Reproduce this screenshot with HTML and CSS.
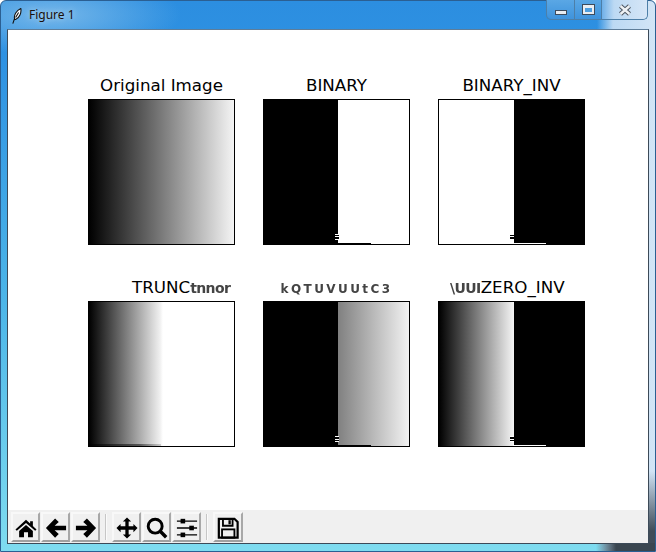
FILE: index.html
```html
<!DOCTYPE html>
<html lang="en">
<head>
  <meta charset="UTF-8">
  <title>Figure 1</title>
  <link rel="stylesheet" href="styles.css">
</head>
<body>
  <div class="window">
    <div class="titlebar">
      <svg class="feather" width="10" height="16" viewBox="0 0 10 16">
        <path d="M0.8 15.6 L2.6 10.5 M2.6 10.8 C1.6 7 4.5 2.5 8.8 0.6 C9.6 4.5 7.5 10 3.6 11.4 C3.2 11.5 2.9 11.3 2.6 10.8 M3.6 9.5 L6.6 4.5" fill="#fff" stroke="#111" stroke-width="1.1"/>
      </svg>
      <span class="title-text">Figure 1</span>
      <div class="win-controls">
        <div class="win-btn min"><span class="min-glyph"></span></div>
        <div class="win-btn max"><span class="max-glyph"></span></div>
        <div class="win-btn close">
          <svg width="14" height="12" viewBox="0 0 14 12">
            <path d="M2.5 2 L11.5 10 M11.5 2 L2.5 10" stroke="#4c5560" stroke-width="4.4"/>
            <path d="M2.5 2 L11.5 10 M11.5 2 L2.5 10" stroke="#eef1f4" stroke-width="2.4"/>
          </svg>
        </div>
      </div>
    </div>
    <div class="client">
      <div class="figure">
        <div class="subplot">
          <div class="plot-title">Original Image</div>
          <div class="axes grad-orig"></div>
        </div>
        <div class="subplot">
          <div class="plot-title">BINARY</div>
          <div class="axes grad-binary"><span class="jag"></span><span class="foot foot-black"></span></div>
        </div>
        <div class="subplot">
          <div class="plot-title">BINARY_INV</div>
          <div class="axes grad-binary-inv"><span class="jag"></span><span class="foot foot-white"></span></div>
        </div>
        <div class="subplot">
          <div class="plot-title title-trunc">TRUNC<span class="smudge">tnnor</span></div>
          <div class="axes grad-trunc"><span class="foot foot-trunc"></span></div>
        </div>
        <div class="subplot">
          <div class="plot-title"><span class="smudge smudge-wide">kQTUVUUtC3</span></div>
          <div class="axes grad-tozero"><span class="jag"></span><span class="foot foot-black"></span></div>
        </div>
        <div class="subplot">
          <div class="plot-title title-inv"><span class="smudge">\UUI</span>ZERO_INV</div>
          <div class="axes grad-tozero-inv"><span class="jag"></span><span class="foot foot-white"></span></div>
        </div>
      </div>
      <div class="toolbar">
        <div class="tool">
          <svg viewBox="0 0 24 24"><path d="M12 3 L16.5 7 V4.5 H19.5 V9.8 L23.5 13.5 L22 15 L12 6.5 L2 15 L0.5 13.5 Z M4.5 15.2 L12 8.8 L19.5 15.2 V22 H14.2 V16.5 H9.8 V22 H4.5 Z" fill="#000"/></svg>
        </div>
        <div class="tool">
          <svg viewBox="0 0 24 24"><path d="M1 12 L11 1.5 L15 5.5 L10.5 9.5 H23 V14.5 H10.5 L15 18.5 L11 22.5 Z" fill="#000"/></svg>
        </div>
        <div class="tool">
          <svg viewBox="0 0 24 24"><path d="M23 12 L13 1.5 L9 5.5 L13.5 9.5 H1 V14.5 H13.5 L9 18.5 L13 22.5 Z" fill="#000"/></svg>
        </div>
        <span class="tool-sep"></span>
        <div class="tool">
          <svg viewBox="0 0 24 24"><path d="M12 0.5 L16.5 5 H13.8 V10.2 H19 V7.5 L23.5 12 L19 16.5 V13.8 H13.8 V19 H16.5 L12 23.5 L7.5 19 H10.2 V13.8 H5 V16.5 L0.5 12 L5 7.5 V10.2 H10.2 V5 H7.5 Z" fill="#000"/></svg>
        </div>
        <div class="tool">
          <svg viewBox="0 0 24 24"><circle cx="10" cy="10" r="7.6" fill="none" stroke="#000" stroke-width="3.2"/><path d="M15 15 L22 22" stroke="#000" stroke-width="3.8"/></svg>
        </div>
        <div class="tool">
          <svg viewBox="0 0 24 24"><path d="M1 4.5 H23 M1 12 H23 M1 19.5 H23" stroke="#000" stroke-width="1.5"/><rect x="5" y="2" width="5" height="5" fill="#000"/><rect x="14.5" y="9.5" width="5" height="5" fill="#000"/><rect x="5" y="17" width="5" height="5" fill="#000"/></svg>
        </div>
        <span class="tool-sep"></span>
        <div class="tool tool-save">
          <svg viewBox="0 0 24 24"><path d="M2 2 H19 L22.5 5.5 V22.5 H2 Z" fill="none" stroke="#000" stroke-width="2.4"/><path d="M6.5 2 H17 V9.5 H6.5 Z" fill="none" stroke="#000" stroke-width="2"/><rect x="12.5" y="3.5" width="2.5" height="4.5" fill="#000"/><rect x="5.5" y="13.5" width="13.5" height="9" fill="none" stroke="#000" stroke-width="2"/></svg>
        </div>
      </div>
    </div>
  </div>
</body>
</html>
```
FILE: styles.css
```css
* {
  box-sizing: border-box;
}
html, body {
  margin: 0;
  height: 100%;
}
body {
  font-family: "DejaVu Sans", sans-serif;
  background: #fff;
}
.window {
  width: 656px;
  height: 552px;
  display: flex;
  flex-direction: column;
  border-radius: 6px 6px 0 0;
  border: 1px solid #2b5f92;
  background:
    linear-gradient(90deg, rgba(58,70,80,0) 595px, #3a4650 615px) 0 100% / 100% 8px no-repeat,
    linear-gradient(180deg, rgba(58,70,80,0) 470px, #3f4c58 530px) 100% 0 / 7px 100% no-repeat,
    radial-gradient(ellipse 130px 40px at 50px 14px, rgba(130, 190, 235, 0.85), rgba(130, 190, 235, 0) 100%),
    linear-gradient(90deg, rgba(188,217,243,0) 596px, #bcd9f3 612px, #d3e5f6 100%),
    linear-gradient(180deg, #2c8ee0 0, #2f92e2 60px, #4cb5e8 300px, #7fdcf0 100%);
}
.titlebar {
  height: 28px;
  flex: none;
  display: flex;
  align-items: flex-start;
  padding-left: 11px;
}
.feather {
  margin-top: 7px;
}
.title-text {
  margin: 6px 0 0 7px;
  font-family: "Noto Sans", sans-serif;
  font-size: 12px;
  line-height: 16px;
  color: #1a0f0a;
  text-shadow: 0 0 6px rgba(255,255,255,0.6);
}
.win-controls {
  margin-left: auto;
  margin-right: 7px;
  display: flex;
  height: 20px;
  margin-top: -1px;
  border: 1px solid #4d7fa8;
  border-top: 0;
  border-radius: 0 0 5px 5px;
}
.win-btn {
  display: flex;
  align-items: center;
  justify-content: center;
  border-right: 1px solid #4d7fa8;
}
.win-btn.min {
  width: 28px;
  border-radius: 0 0 0 5px;
  background: linear-gradient(180deg, #5aa7e5, #3f93dc);
}
.win-btn.max {
  width: 27px;
  background: linear-gradient(180deg, #5aa7e5, #3f93dc);
}
.win-btn.close {
  width: 45px;
  border-right: 0;
  border-radius: 0 0 5px 0;
  background: linear-gradient(90deg, #6fb0e8 0, #bcd9f3 12px, #d6e6f7 100%);
}
.min-glyph {
  display: block;
  width: 12px;
  height: 5px;
  margin-top: 5px;
  background: #e9edf2;
  border: 1px solid #3d4b5c;
}
.max-glyph {
  display: block;
  width: 11px;
  height: 9px;
  background: #4f9fe0;
  border: 2px solid #e9edf2;
  border-top-width: 3px;
  outline: 1px solid #3d4b5c;
}
.client {
  flex: 1;
  display: flex;
  flex-direction: column;
  margin: 0 6px 7px 6px;
  background: #fff;
  border: 1px solid #3c4a58;
  border-top-color: #5e7d99;
}
.figure {
  flex: 1;
  display: grid;
  grid-template-columns: repeat(3, 147px);
  grid-auto-rows: 146px;
  column-gap: 28px;
  row-gap: 56px;
  padding: 69px 0 0 80px;
}
.subplot {
  position: relative;
}
.plot-title {
  position: absolute;
  left: -14px;
  right: -14px;
  top: -24px;
  text-align: center;
  font-size: 16.7px;
  line-height: 20px;
  color: #000;
  white-space: nowrap;
}
.title-trunc {
  left: 44px;
  right: auto;
}
.title-inv {
  left: 12px;
  right: auto;
}
.axes {
  position: relative;
  width: 147px;
  height: 146px;
  border: 1px solid #000;
}
.smudge {
  display: inline-block;
  font-size: 14px;
  font-weight: bold;
  color: #444;
  filter: blur(0.7px);
  letter-spacing: -0.6px;
}
.smudge-wide {
  letter-spacing: 2.4px;
  font-size: 12px;
}
.grad-orig {
  background: linear-gradient(90deg, #000, #f4f4f4);
}
.grad-binary {
  background: linear-gradient(90deg, #000 0, #000 51%, #fff 51%, #fff 100%);
}
.grad-binary-inv {
  background: linear-gradient(90deg, #fff 0, #fff 51.5%, #000 51.5%, #000 100%);
}
.grad-trunc {
  background: linear-gradient(90deg, #000 0, #f0f0f0 49%, #fff 51%, #fff 100%);
}
.grad-tozero {
  background: linear-gradient(90deg, #000 0, #000 51%, #808080 51%, #f2f2f2 100%);
}
.grad-tozero-inv {
  background: linear-gradient(90deg, #000 0, #f4f4f4 51.5%, #000 51.5%, #000 100%);
}
.jag {
  position: absolute;
  left: 71px;
  top: 134px;
  width: 4px;
  height: 6px;
  background: repeating-linear-gradient(180deg, #fff 0, #fff 1px, #000 1px, #000 2.5px);
}
.foot {
  position: absolute;
  left: 74px;
  bottom: 0;
  width: 33px;
  height: 1px;
}
.foot-black {
  background: #000;
}
.foot-white {
  background: #fff;
}
.foot-trunc {
  left: 0;
  width: 72px;
  height: 2px;
  background: linear-gradient(90deg, #000, #555 70%, #ccc);
}
.toolbar {
  height: 33px;
  flex: none;
  display: flex;
  align-items: center;
  padding-left: 3px;
  gap: 1px;
  background: #f0f0f0;
}
.tool {
  width: 29px;
  height: 30px;
  display: flex;
  align-items: center;
  justify-content: center;
  padding-top: 3px;
  background: #f0f0f0;
  border: 2px solid;
  border-color: #f8f8f8 #a8a8a8 #a0a0a0 #f8f8f8;
}
.tool svg {
  display: block;
  width: 22px;
  height: 22px;
  flex: none;
}
.tool-save {
  width: 30px;
}
.tool-sep {
  width: 2px;
  height: 26px;
  margin: 0 4px;
  background: #c6c6c6;
  border-right: 1px solid #fafafa;
}
```
